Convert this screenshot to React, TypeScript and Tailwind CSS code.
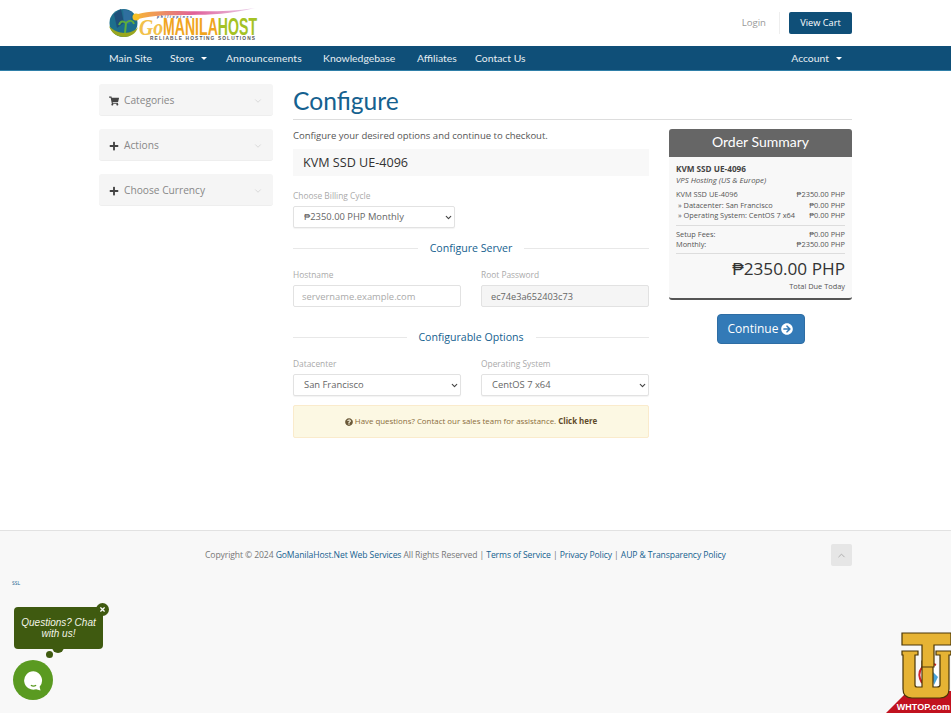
import { FaShoppingCart, FaPlus, FaQuestionCircle, FaArrowCircleRight, FaTimes } from "react-icons/fa";
import { ChevronDown, ChevronUp } from "lucide-react";

const sans = "font-['Open_Sans',sans-serif]";
const display = "font-['Lato',sans-serif]";

function Logo() {
  return (
    <svg width="165" height="36" viewBox="0 0 165 36" className="block">
      <defs>
        <linearGradient id="swoosh" x1="0" x2="1">
          <stop offset="0" stopColor="#f7b733" />
          <stop offset="0.5" stopColor="#e0609a" />
          <stop offset="1" stopColor="#e9d5ee" />
        </linearGradient>
      </defs>
      <path d="M26 10 C 55 1, 95 11, 147 3 C 100 15, 60 6, 30 14 Z" fill="url(#swoosh)" />
      <circle cx="15.5" cy="18" r="14" fill="#1d6f8c" />
      <path d="M1 21 C 5 35, 26 36, 30 22 C 25 29, 10 31, 1 21 Z" fill="#9aa71f" />
      <path d="M6 9 L13 4 L16 18 L9 23 Z" fill="#1f4f7a" />
      <path d="M15 4 L24 7 L22 19 L16 18 Z" fill="#2f6f9f" />
      <path d="M17 28 L18 18 M18 18 C 14 15 12 17 11 20 M18 18 C 22 14 25 16 26 19" stroke="#5fae3c" strokeWidth="2" fill="none" />
      <circle cx="28" cy="12" r="3.5" fill="#f6c026" />
      <text x="49" y="12.5" fontFamily="Liberation Sans, sans-serif" fontWeight="700" fontStyle="italic" fontSize="3.5" textLength="35" fill="#1f3f7a">philippines</text>
      <text x="31" y="30" fontFamily="Liberation Serif, serif" fontStyle="italic" fontWeight="700" fontSize="24" textLength="24" lengthAdjust="spacingAndGlyphs" fill="#f2c14a">Go</text>
      <text x="55" y="29.5" fontFamily="Liberation Sans, sans-serif" fontWeight="700" fontSize="23" textLength="94" lengthAdjust="spacingAndGlyphs"><tspan fill="#f0a51e">MANILA</tspan><tspan fill="#a4c224">HOST</tspan></text>
      <text x="42" y="34.5" fontFamily="Liberation Sans, sans-serif" fontWeight="700" fontSize="4.8" textLength="105" fill="#555555">RELIABLE HOSTING SOLUTIONS</text>
    </svg>
  );
}

function SidePanel({ icon, title }: { icon: React.ReactNode; title: string }) {
  return (
    <div className="flex h-[32px] items-center rounded-[3px] border-b border-[#eeeeee] bg-[#f5f5f5] pt-[2px] pr-[10px] pl-[10px] text-[10.2px] text-[#888888]">
      <span className="mr-[5px] text-[10px] text-[#444444]">{icon}</span>
      <span className="flex-1">{title}</span>
      <ChevronDown size={10} className="text-[#d4d4d4]" />
    </div>
  );
}

function SectionTitle({ title, gap }: { title: string; gap: string }) {
  return (
    <div className="flex items-center">
      <div className="h-px flex-1 bg-[#e8e8e8]" />
      <div className={`${gap} text-center text-[10.6px] leading-[16px] text-[#15618f]`}>{title}</div>
      <div className="h-px flex-1 bg-[#e8e8e8]" />
    </div>
  );
}

function Label({ children }: { children: React.ReactNode }) {
  return <div className="mb-[5px] text-[8.4px] leading-[11px] text-[#aaaaaa]">{children}</div>;
}

function Select({ value, className }: { value: string; className: string }) {
  return (
    <div className={`relative ${className}`}>
      <select
        defaultValue={value}
        className="block h-[22px] w-full appearance-none rounded-[2px] border border-[#e2e2e2] bg-white pl-[10px] text-[9.4px] text-[#666666] shadow-[0_1px_1px_rgba(0,0,0,0.05)]"
      >
        <option>{value}</option>
      </select>
      <ChevronDown size={9} strokeWidth={3} className="pointer-events-none absolute top-[7px] right-[2px] text-[#444444]" />
    </div>
  );
}

function SummaryRow({ left, right, cls = "" }: { left: string; right: string; cls?: string }) {
  return (
    <div className={`flex justify-between leading-[10.5px] ${cls}`}>
      <span>{left}</span>
      <span>{right}</span>
    </div>
  );
}

export default function App() {
  return (
    <div className={`${sans} relative h-[713px] w-[951px] overflow-hidden bg-white`}>
      <header className="h-[46px] bg-white">
        <div className="mx-auto flex h-full w-[753px] items-center justify-between">
          <div className="ml-[9px]">
            <Logo />
          </div>
          <div className="flex items-center">
            <span className="text-[9.6px] text-[#999999]">Login</span>
            <div className="mr-[9px] ml-[13px] h-[22px] w-px bg-[#eeeeee]" />
            <button className="h-[22px] w-[63px] rounded-[2px] bg-[#0f4f78] text-[9.2px] text-white">View Cart</button>
          </div>
        </div>
      </header>

      <nav className={`${display} h-[25px] border-b border-[#2f7fa8] bg-[#0f4f78] pt-[1px] text-[10.4px] whitespace-nowrap text-[#e6eef3]`}>
        <div className="mx-auto flex h-full w-[753px] items-center justify-between px-[10px]">
          <div className="flex items-center gap-[20px]">
            <span className="w-[41px]">Main Site</span>
            <span className="flex w-[36px] items-center">
              Store
              <span className="ml-[7px] h-0 w-0 border-x-[3px] border-t-[3px] border-x-transparent border-t-white" />
            </span>
            <span className="w-[77px] tracking-[0.1px]">Announcements</span>
            <span className="w-[74px]">Knowledgebase</span>
            <span className="w-[38px]">Affiliates</span>
            <span className="w-[50px]">Contact Us</span>
          </div>
          <span className="flex items-center">
            Account
            <span className="ml-[7px] h-0 w-0 border-x-[3px] border-t-[3px] border-x-transparent border-t-white" />
          </span>
        </div>
      </nav>

      <main className="mx-auto flex h-[459px] w-[753px] gap-[20px] pt-[13px]">
        <aside className="flex w-[174px] flex-col gap-[13px]">
          <SidePanel icon={<FaShoppingCart />} title="Categories" />
          <SidePanel icon={<FaPlus />} title="Actions" />
          <SidePanel icon={<FaPlus />} title="Choose Currency" />
        </aside>

        <section className="mt-[1px] w-[559px]">
          <h1 className={`${display} h-[35px] border-b border-[#dddddd] text-[24.6px] leading-[32px] font-normal text-[#15618f]`}>Configure</h1>
          <div className="mt-[9px] flex gap-[20px]">
            <div className="w-[356px]">
              <p className="text-[9.5px] leading-[14px] text-[#555555]">Configure your desired options and continue to checkout.</p>
              <div className="mt-[6px] flex h-[27px] items-center bg-[#f8f8f8] pt-[1px] pl-[10px] text-[12.6px] text-[#333333]">KVM SSD UE-4096</div>

              <div className="mt-[14px]">
                <Label>Choose Billing Cycle</Label>
                <Select value="₱2350.00 PHP Monthly" className="w-[162px]" />
              </div>

              <div className="mt-[12px]">
                <SectionTitle title="Configure Server" gap="w-[106px]" />
              </div>

              <div className="mt-[13px] grid grid-cols-2 gap-[20px]">
                <div>
                  <Label>Hostname</Label>
                  <input
                    readOnly
                    placeholder="servername.example.com"
                    className="block h-[22px] w-full rounded-[2px] border border-[#e2e2e2] bg-white px-[8px] text-[9.4px] placeholder:text-[#aaaaaa]"
                  />
                </div>
                <div>
                  <Label>Root Password</Label>
                  <input
                    readOnly
                    value="ec74e3a652403c73"
                    className="block h-[22px] w-full rounded-[2px] border border-[#e2e2e2] bg-[#f5f5f5] px-[9px] text-[9.2px] text-[#666666]"
                  />
                </div>
              </div>

              <div className="mt-[22px]">
                <SectionTitle title="Configurable Options" gap="w-[129px]" />
              </div>

              <div className="mt-[13px] grid grid-cols-2 gap-[20px]">
                <div>
                  <Label>Datacenter</Label>
                  <Select value="San Francisco" className="w-full" />
                </div>
                <div>
                  <Label>Operating System</Label>
                  <Select value="CentOS 7 x64" className="w-full" />
                </div>
              </div>

              <div className="mt-[9px] flex h-[33px] items-center justify-center gap-[2px] rounded-[2px] border border-[#faebcc] bg-[#fcf8e3] text-[7.9px] text-[#8a6d3b]">
                <FaQuestionCircle className="text-[8px] text-[#6b5a3a]" />
                <span>
                  Have questions? Contact our sales team for assistance. <b className="text-[#5f4b2a]">Click here</b>
                </span>
              </div>
            </div>

            <div className="w-[183px]">
              <div className="overflow-hidden rounded-[3px] border-b-2 border-[#555555] bg-[#f8f8f8]">
                <div className={`${display} flex h-[28px] items-center justify-center bg-[#666666] pb-[3px] text-[14px] font-normal text-white`}>Order Summary</div>
                <div className="px-[7px] pt-[6px] pb-[8px] text-[7.4px] text-[#555555]">
                  <div className="text-[8.2px] leading-[12px] font-bold text-[#444444]">KVM SSD UE-4096</div>
                  <div className="mb-[3px] text-[7.8px] leading-[11px] italic">VPS Hosting (US &amp; Europe)</div>
                  <SummaryRow left="KVM SSD UE-4096" right="₱2350.00 PHP" />
                  <SummaryRow left="» Datacenter: San Francisco" right="₱0.00 PHP" cls="pl-[2px]" />
                  <SummaryRow left="» Operating System: CentOS 7 x64" right="₱0.00 PHP" cls="pl-[2px]" />
                  <div className="mt-[4px] mb-[3px] h-px bg-[#dddddd]" />
                  <SummaryRow left="Setup Fees:" right="₱0.00 PHP" />
                  <SummaryRow left="Monthly:" right="₱2350.00 PHP" />
                  <div className="mt-[3px] h-px bg-[#dddddd]" />
                  <div className="pt-[1px] text-right text-[17.2px] leading-[27px] text-[#333333]">₱2350.00 PHP</div>
                  <div className="text-right leading-[8px]">Total Due Today</div>
                </div>
              </div>
              <div className="mt-[14px] flex justify-center">
                <button className="flex h-[30px] w-[88px] items-center justify-center gap-[3px] rounded-[4px] border border-[#2e6da4] bg-[#337ab7] text-[12px] text-white">
                  Continue <FaArrowCircleRight className="text-[12px]" />
                </button>
              </div>
            </div>
          </div>
        </section>
      </main>

      <footer className="h-[183px] border-t border-[#e2e2e2] bg-[#f8f8f8]">
        <div className="mx-auto flex w-[753px] items-start pt-[13px]">
          <p className="mt-[5px] flex-1 pl-[106px] text-[8.6px] tracking-[-0.1px] text-[#777777]">
            Copyright © 2024 <span className="text-[#15618f]">GoManilaHost.Net Web Services</span> All Rights Reserved |{" "}
            <span className="text-[#15618f]">Terms of Service</span> | <span className="text-[#15618f]">Privacy Policy</span> |{" "}
            <span className="text-[#15618f]">AUP &amp; Transparency Policy</span>
          </p>
          <div className="flex h-[22px] w-[21px] items-center justify-center rounded-[2px] bg-[#e6e6e6]">
            <ChevronUp size={11} className="text-[#aaaaaa]" />
          </div>
        </div>
        <div className="mt-[14px] pl-[12px] text-[5px] text-[#15618f]">SSL</div>
      </footer>

      <div className="absolute top-[607px] left-[14px] flex h-[42px] w-[89px] items-center justify-center rounded-[4px] bg-[#3f5a10] px-[6px] text-center font-['Liberation_Sans',sans-serif] text-[10px] leading-[11px] text-[#f3f5e8] italic">
        Questions? Chat with us!
      </div>
      <div className="absolute top-[603px] left-[96px] flex h-[13px] w-[13px] items-center justify-center rounded-full bg-[#3f5a10] text-[7px] text-white">
        <FaTimes />
      </div>
      <div className="absolute top-[644px] left-[52px] h-[9px] w-[12px] rounded-b-full bg-[#3f5a10]" />
      <div className="absolute top-[651px] left-[46px] h-[7px] w-[7px] rounded-full bg-[#3f5a10]" />
      <div className="absolute top-[660px] left-[13px] flex h-[40px] w-[40px] items-center justify-center rounded-full bg-[#5a9a21]">
        <svg width="21" height="21" viewBox="0 0 24 24">
          <path d="M12 1.5 a10.5 10.5 0 1 0 3 20.5 l5 1.5 l-1-4.5 A10.5 10.5 0 0 0 12 1.5 Z" fill="#ffffff" />
          <path d="M9 17.5 q3 2 6 0" stroke="#5a9a21" strokeWidth="1.5" fill="none" />
        </svg>
      </div>

      <svg className="absolute top-[631px] left-[886px]" width="65" height="82" viewBox="0 0 65 82">
        <path d="M0 82 L22 60 L65 60 L65 82 Z" fill="#c1121f" />
        <path d="M34 48 C 28 36, 40 26, 52 34 L 52 58 L 36 58 Z" fill="#ffffff" />
        <path d="M36 52 C 29 40, 38 29, 50 34" stroke="#d0202a" strokeWidth="2" fill="none" />
        <path d="M44 38 L52 46 L48 54 Z" fill="#4aa3d8" />
        <g fill="#e6b334" stroke="#4a3608" strokeWidth="1.2">
          <path d="M16 20 H32 V24 H29 V54 Q29 56 31 56 H36 V30 H47 V56 H51 Q54 56 54 54 V24 H50 V20 H65 V24 H63 V58 Q63 67 54 67 H26 Q17 67 17 58 V24 H16 Z" />
          <path d="M16 2 H65 V14 H48 V36 H36 V14 H16 Z" />
        </g>
        <text x="64" y="79" textAnchor="end" fontFamily="Liberation Sans, sans-serif" fontWeight="700" fontSize="9" fill="#ffffff">WHTOP.com</text>
      </svg>
    </div>
  );
}
